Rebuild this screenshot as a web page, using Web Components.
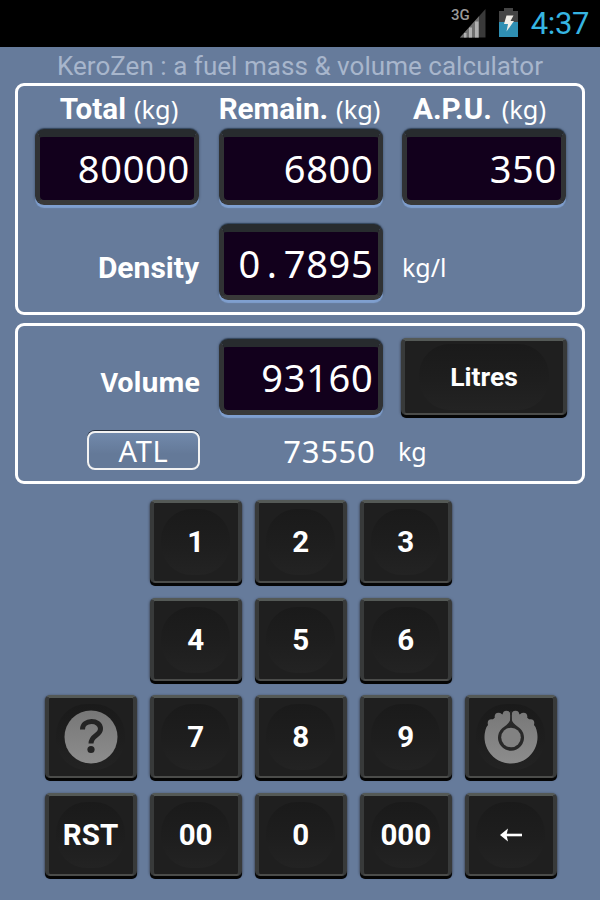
<!DOCTYPE html>
<html lang="en">
<head>
<meta charset="utf-8">
<title>KeroZen</title>
<style>
body {
	margin: 0;
	width: 600px;
	height: 900px;
	overflow: hidden;
	background: #667b9b;
	font-family: Roboto, sans-serif;
	color: #fff;
}
</style>
</head>
<body>
<kero-app></kero-app>

<template id="status-bar">
<style>
:host {
	display: flex;
	justify-content: flex-end;
	align-items: flex-start;
	height: 47px;
	background: #000;
	box-sizing: border-box;
	padding-right: 11px;
	font-family: Roboto, sans-serif;
}
svg { display: block; }
.net { font-size: 15px; line-height: 16px; color: #999; padding-top: 7px; font-weight: 500; }
.signal { margin: 8px 13px 0 -10px; }
.battery { margin: 8px 13px 0 0; }
.clock { color: #36b5e2; font-size: 31px; line-height: 36px; padding-top: 6px; letter-spacing: -0.4px; }
</style>
<span class="net">3G</span>
<svg class="signal" width="26" height="30" viewBox="0 0 26 30">
	<path d="M0 29.500L25.500 1V29.500Z" fill="#393939"/>
	<path d="M0 29.500L19 8.300V29.500Z" fill="#707070"/>
	<path d="M4 25h2.500v4.500H4zM9 19.500h3v10H9zM15 13.500h3.500v16H15z" fill="#b0b0b0"/>
</svg>
<svg class="battery" width="19" height="29" viewBox="0 0 19 29">
	<path d="M5 0h9v3h5v12H0V3h5z" fill="#454545"/>
	<path d="M0 14h19v15H0z" fill="#2f8fb3"/>
	<path d="M7.500 7.500h7l-3 5.500h3.500L7.500 23.500l1.500-7.500H5z" fill="#f1eee8"/>
</svg>
<span class="clock"><slot></slot></span>
</template>

<template id="info-panel">
<style>
:host {
	display: block;
	box-sizing: border-box;
	border: 3px solid #fff;
	border-radius: 9px;
	margin: 0 15px;
	padding: 0 17px;
}
</style>
<slot></slot>
</template>

<template id="number-field">
<style>
:host {
	display: flex;
	align-items: center;
	justify-content: flex-end;
	box-sizing: border-box;
	width: 164px;
	height: 76px;
	border: 5px solid #393939;
	border-top: 8px solid #272b2e;
	border-left-color: #303234;
	border-right-color: #303234;
	border-radius: 9px;
	background: #12001c;
	padding-right: 4px;
	box-shadow: 0 3px 1px #7f9fcf, 0 -1px 1px #34465c, 0 0 2px 1px #52647f;
	font: 38px/50px "Noto Sans", sans-serif;
	letter-spacing: 0.7px;
}
.screen {
	display: flex;
	align-items: center;
	height: 58px;
	margin-top: -2px;
	white-space: nowrap;
}
</style>
<span class="screen"><slot></slot></span>
</template>

<template id="key-button">
<style>
:host {
	display: flex;
	align-items: center;
	justify-content: center;
	box-sizing: border-box;
	height: 83px;
	border: 2px solid #4b4c4a;
	border-top: 3px solid #545956;
	border-left: 4px solid #383a3a;
	border-right: 4px solid #383a3a;
	border-radius: 5px;
	background: #1f1f1f;
	box-shadow: 0 3px 0 #050505, 0 1px 2px 1px #485569;
	font: bold 29.5px/40px Roboto, sans-serif;
}
/* faint dished centre */
.dish {
	display: flex;
	align-items: center;
	justify-content: center;
	width: 82%;
	height: 66px;
	border-radius: 31px;
	background: linear-gradient(#1a1a1a, #1e1e1e 55%, #232323);
}
</style>
<div class="dish"><slot></slot></div>
</template>

<template id="key-pad">
<style>
:host {
	display: grid;
	grid-template-columns: repeat(5, 92px);
	grid-auto-rows: 83px;
	gap: 14.6px 13.1px;
	margin: 16px 0 0 44.5px;
}
</style>
<slot></slot>
</template>

<template id="kero-app">
<style>
:host { display: block; height: 900px; }
svg { display: block; }
.title {
	height: 36px;
	box-sizing: border-box;
	padding-top: 3px;
	text-align: center;
	font-size: 26px;
	line-height: 32px;
	letter-spacing: 0.04px;
	color: #a8b6cc;
	white-space: nowrap;
}
.inputs { height: 232px; }
.results { height: 161px; margin-top: 8px; }
.row {
	display: grid;
	grid-template-columns: repeat(3, 165px);
	column-gap: 18.5px;
	align-items: center;
}
.heads {
	height: 43px;
	line-height: 42px;
	font-size: 29.6px;
	white-space: nowrap;
}
.heads div { display: flex; justify-content: center; align-items: baseline; gap: 8px; padding-top: 2px; }
.heads div:first-child { padding-left: 3px; }
.heads div:nth-child(2) { margin-left: -3px; }
.heads div:last-child { justify-content: flex-start; padding-left: 11px; gap: 10px; }
.heads small { font: 25.3px/40px "Noto Sans", sans-serif; }
.density { margin-top: 19px; }
.volume { margin-top: 12px; }
.label { text-align: right; font-weight: bold; font-size: 30px; line-height: 40px; padding-top: 12px; }
.density .label { padding-right: 1px; }
.volume .label { font-family: "Noto Sans", sans-serif; font-size: 27px; letter-spacing: -0.4px; padding-top: 11px; }
.unit { font: 25px/40px "Noto Sans", sans-serif; padding-top: 9px; }
.dot { padding: 0 6px; }
.volume key-button { height: 77px; width: 166px; margin: 0 0 0 -1px; font-size: 26.500px; }
.total { margin-top: 14px; font: 29px/40px "Noto Sans", sans-serif; }
.tank {
	justify-self: end;
	box-sizing: border-box;
	width: 113px;
	height: 39px;
	border: 2px solid #f2f2f2;
	border-radius: 8px;
	box-shadow: 0 -1px 0 #27313f;
	background: linear-gradient(#7189ab, #647998 60%);
	text-align: center;
	line-height: 36px;
	letter-spacing: 0.8px;
}
.mass { text-align: right; padding: 2px 8px 0 0; font-size: 31px; letter-spacing: 0.7px; }
.total .unit { padding: 2px 0 0; margin-left: -4px; }
.start { grid-column-start: 2; }
.edge { grid-column-start: 1; }
</style>
<status-bar>4:37</status-bar>
<div class="title">KeroZen : a fuel mass &amp; volume calculator</div>
<info-panel class="inputs">
	<div class="row heads">
		<div><b>Total</b> <small>(kg)</small></div>
		<div><b>Remain.</b> <small>(kg)</small></div>
		<div><b>A.P.U.</b> <small>(kg)</small></div>
	</div>
	<div class="row">
		<number-field>80000</number-field>
		<number-field>6800</number-field>
		<number-field>350</number-field>
	</div>
	<div class="row density">
		<div class="label">Density</div>
		<number-field><span>0<span class="dot">.</span>7895</span></number-field>
		<div class="unit">kg/l</div>
	</div>
</info-panel>
<info-panel class="results">
	<div class="row volume">
		<div class="label">Volume</div>
		<number-field>93160</number-field>
		<key-button>Litres</key-button>
	</div>
	<div class="row total">
		<div class="tank">ATL</div>
		<div class="mass">73550</div>
		<div class="unit">kg</div>
	</div>
</info-panel>
<key-pad>
	<key-button class="start">1</key-button>
	<key-button>2</key-button>
	<key-button>3</key-button>
	<key-button class="start">4</key-button>
	<key-button>5</key-button>
	<key-button>6</key-button>
	<key-button class="edge">
		<svg width="56" height="56" viewBox="0 0 56 56">
			<defs><linearGradient id="g" x2="0" y2="1"><stop stop-color="#777"/><stop offset="1" stop-color="#8d8d8d"/></linearGradient></defs>
			<circle cx="28" cy="28" r="26.500" fill="url(#g)"/>
			<path d="M19.500 20.500C19.500 10 37.500 10 37.500 20C37.500 26.500 28 26 28 34.500" fill="none" stroke="#242424" stroke-width="5"/>
			<circle cx="28" cy="40.500" r="3.600" fill="#242424"/>
		</svg>
	</key-button>
	<key-button>7</key-button>
	<key-button>8</key-button>
	<key-button>9</key-button>
	<key-button>
		<svg width="56" height="56" viewBox="0 0 56 56">
			<defs><linearGradient id="h" gradientUnits="userSpaceOnUse" x1="0" y1="0" x2="0" y2="56"><stop stop-color="#777"/><stop offset="1" stop-color="#8d8d8d"/></linearGradient></defs>
			<g fill="url(#h)">
				<path d="M3.500 18A26.500 26.500 0 1 0 52.500 18L48 12L40 5L28 6L16 5L8 12Z"/>
				<circle cx="23.500" cy="5.500" r="3.800"/>
				<circle cx="32.500" cy="5.500" r="3.800"/>
				<circle cx="15.500" cy="7.500" r="3.800"/>
				<circle cx="40.500" cy="7.500" r="3.800"/>
				<circle cx="8.500" cy="14" r="3.800"/>
				<circle cx="47.500" cy="14" r="3.800"/>
			</g>
			<path d="M28 7.500C28.500 12.500 31 15 34.500 17.500A13 13 0 1 1 21.500 17.500C25 15 27.500 12.500 28 7.500Z" fill="#282828"/>
			<path d="M28 2V12" stroke="#282828" stroke-width="1.800"/>
			<circle cx="28" cy="28.500" r="9.800" fill="#828282"/>
		</svg>
	</key-button>
	<key-button class="edge">RST</key-button>
	<key-button>00</key-button>
	<key-button>0</key-button>
	<key-button>000</key-button>
	<key-button>
		<svg width="24" height="18" viewBox="0 0 24 18">
			<path d="M7 9H23" stroke="#fff" stroke-width="2.600" fill="none"/>
			<path d="M1 9L9 2.500L7.500 9L9 15.500Z" fill="#fff"/>
		</svg>
	</key-button>
</key-pad>
</template>

<script>
class TemplateElement extends HTMLElement {
	constructor() {
		super();
		const template = document.getElementById(this.localName);
		this.attachShadow({ mode: 'open' });
		this.shadowRoot.appendChild(template.content.cloneNode(true));
	}
}

customElements.define('status-bar', class extends TemplateElement {});
customElements.define('info-panel', class extends TemplateElement {});
customElements.define('number-field', class extends TemplateElement {});
customElements.define('key-button', class extends TemplateElement {});
customElements.define('key-pad', class extends TemplateElement {});
customElements.define('kero-app', class extends TemplateElement {});
</script>
</body>
</html>
